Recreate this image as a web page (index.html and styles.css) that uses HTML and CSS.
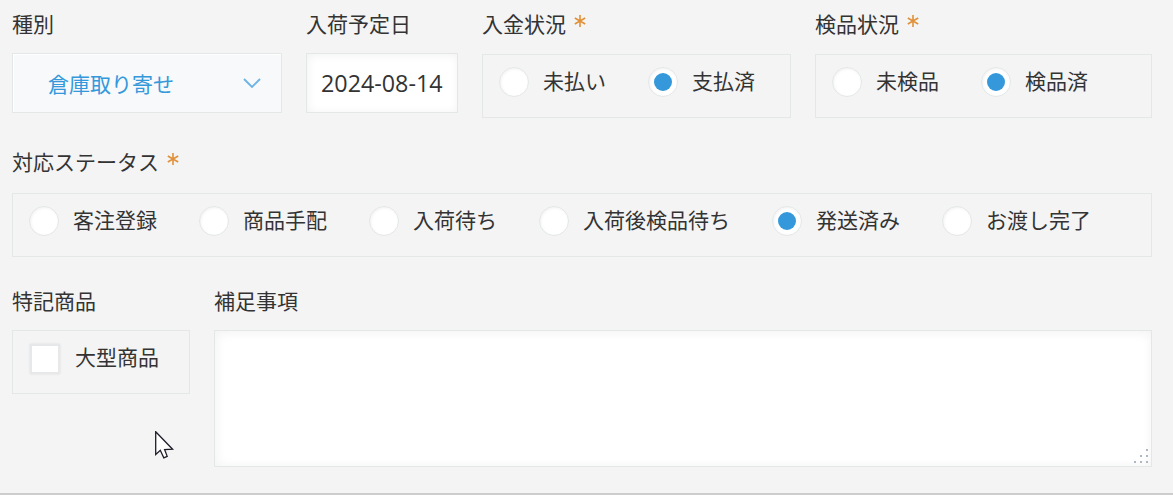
FILE: index.html
```html
<!DOCTYPE html>
<html lang="ja">
<head>
<meta charset="utf-8">
<title>Form</title>
<link rel="stylesheet" href="styles.css">
</head>
<body>
<div class="form">
  <div class="row row-1">
    <div class="field">
      <div class="label">種別</div>
      <div class="select">
        <span class="select-text">倉庫取り寄せ</span>
        <svg class="chevron" width="18" height="10" viewBox="0 0 18 10"><path d="M1 1 L9 9 L17 1" fill="none" stroke="#6cb3e6" stroke-width="1.8"/></svg>
      </div>
    </div>
    <div class="field">
      <div class="label">入荷予定日</div>
      <div class="date">2024-08-14</div>
    </div>
    <div class="field">
      <div class="label">入金状況<svg class="req" width="12" height="12" viewBox="0 0 12 12"><path d="M6 0 V12 M0.8 3 L11.2 9 M0.8 9 L11.2 3" stroke="#e0913a" stroke-width="1.6"/></svg></div>
      <div class="group group-pay">
        <div class="opt"><span class="circle"></span><span class="opt-label">未払い</span></div>
        <div class="opt"><span class="circle on"><span class="dot"></span></span><span class="opt-label">支払済</span></div>
      </div>
    </div>
    <div class="field">
      <div class="label">検品状況<svg class="req" width="12" height="12" viewBox="0 0 12 12"><path d="M6 0 V12 M0.8 3 L11.2 9 M0.8 9 L11.2 3" stroke="#e0913a" stroke-width="1.6"/></svg></div>
      <div class="group group-insp">
        <div class="opt"><span class="circle"></span><span class="opt-label">未検品</span></div>
        <div class="opt"><span class="circle on"><span class="dot"></span></span><span class="opt-label">検品済</span></div>
      </div>
    </div>
  </div>

  <div class="row row-2">
    <div class="field">
      <div class="label">対応ステータス<svg class="req" width="12" height="12" viewBox="0 0 12 12"><path d="M6 0 V12 M0.8 3 L11.2 9 M0.8 9 L11.2 3" stroke="#e0913a" stroke-width="1.6"/></svg></div>
      <div class="group group-status">
        <div class="opt"><span class="circle"></span><span class="opt-label">客注登録</span></div>
        <div class="opt"><span class="circle"></span><span class="opt-label">商品手配</span></div>
        <div class="opt"><span class="circle"></span><span class="opt-label">入荷待ち</span></div>
        <div class="opt"><span class="circle"></span><span class="opt-label">入荷後検品待ち</span></div>
        <div class="opt"><span class="circle on"><span class="dot"></span></span><span class="opt-label">発送済み</span></div>
        <div class="opt"><span class="circle"></span><span class="opt-label">お渡し完了</span></div>
      </div>
    </div>
  </div>

  <div class="row row-3">
    <div class="field">
      <div class="label">特記商品</div>
      <div class="group group-check">
        <div class="opt"><span class="checkbox"></span><span class="opt-label">大型商品</span></div>
      </div>
    </div>
    <div class="field">
      <div class="label">補足事項</div>
      <div class="textarea">
        <svg class="grip" width="14" height="14" viewBox="0 0 14 14" fill="#aeb7c2"><rect x="12" y="0" width="2" height="2"/><rect x="6" y="6" width="2" height="2"/><rect x="12" y="6" width="2" height="2"/><rect x="0" y="12" width="2" height="2"/><rect x="6" y="12" width="2" height="2"/><rect x="12" y="12" width="2" height="2"/></svg>
      </div>
    </div>
  </div>
</div>
<div class="bottom-line"></div>
<svg class="cursor" width="20" height="29" viewBox="0 0 20 29"><path d="M0.7 0.7 L0.7 23.5 L5.3 19.3 L8.8 26.8 L12.2 25.3 L9.6 18.6 L17.6 18.2 Z" fill="#fff" stroke="#1e1e2a" stroke-width="1.3" stroke-linejoin="miter"/></svg>
</body>
</html>
```

FILE: styles.css
```css
html, body {
  margin: 0;
  padding: 0;
  background: #f4f4f4;
}
body {
  position: relative;
  width: 1173px;
  height: 495px;
  overflow: hidden;
  font-family: "Noto Sans CJK JP", "Noto Sans", sans-serif;
  font-size: 21px;
  color: #333;
}
.form {
  padding: 8px 0 0 12px;
  height: 485px;
  box-sizing: border-box;
}
.row {
  display: flex;
  gap: 24px;
  align-items: flex-start;
}
.row-2, .row-3 {
  margin-top: 28px;
}
.field {
  display: flex;
  flex-direction: column;
}
.label {
  height: 30px;
  line-height: 30px;
  margin-bottom: 15px;
  white-space: nowrap;
}
.req {
  display: inline-block;
  vertical-align: top;
  margin-top: 7px;
  margin-left: 8px;
}
.row-2 .label {
  margin-bottom: 17px;
}
.select {
  box-sizing: border-box;
  width: 270px;
  height: 60px;
  border: 1px solid #e3e7e8;
  background: #f7f9fa;
  box-shadow: inset 1px 1px 1px #fff;
  display: flex;
  align-items: center;
  padding: 0 20px 0 35px;
  color: #3498db;
}
.select-text {
  margin-right: auto;
}
.chevron {
  margin-top: -1px;
}
.date {
  box-sizing: border-box;
  width: 152px;
  height: 60px;
  border: 1px solid #e3e7e8;
  background: #fff;
  box-shadow: inset 1px 1px 10px #f1f1f1;
  display: flex;
  align-items: center;
  padding-left: 14px;
  font-family: "Open Sans", "Noto Sans", sans-serif;
  font-size: 23.3px;
  color: #333;
  white-space: nowrap;
  overflow: hidden;
}
.group {
  box-sizing: border-box;
  height: 64px;
  border: 1px solid #e3e7e8;
  padding: 12px 16px;
  display: flex;
  align-items: flex-start;
}
.row-1 .group {
  margin-top: 1px;
}
.group-pay { width: 309px; }
.group-insp { width: 337px; }
.group-status { width: 1140px; }
.group-check { width: 178px; }
.opt {
  display: flex;
  align-items: center;
  gap: 14px;
  margin-right: 42px;
  height: 30px;
}
.opt-label {
  line-height: 30px;
  white-space: nowrap;
  position: relative;
  top: -2px;
}
.circle {
  box-sizing: border-box;
  width: 30px;
  height: 30px;
  border-radius: 50%;
  background: #fff;
  border: 1px solid #e3e7e8;
  box-shadow: inset 1px 1px 3px #f1f1f1;
  display: flex;
  align-items: center;
  justify-content: center;
  flex: none;
}
.dot {
  width: 18px;
  height: 18px;
  border-radius: 50%;
  background: #3498db;
}
.checkbox {
  box-sizing: border-box;
  width: 30px;
  height: 30px;
  background: #fff;
  border: 2px solid #e6e8ea;
  box-shadow: 0 0 2px #dcdcdc;
  margin: 1px 0 0 1px;
  flex: none;
}
.group-check .opt {
  gap: 15px;
}
.textarea {
  position: relative;
  box-sizing: border-box;
  width: 938px;
  height: 137px;
  border: 1px solid #e3e7e8;
  background: #fff;
  box-shadow: inset 1px 1px 12px #f1f1f1;
}
.grip {
  position: absolute;
  right: 3px;
  bottom: 3px;
}
.bottom-line {
  position: absolute;
  left: 0;
  top: 493px;
  width: 1173px;
  height: 2px;
  background: #cdcdcd;
}
.cursor {
  position: absolute;
  left: 154.5px;
  top: 430.5px;
}
```
